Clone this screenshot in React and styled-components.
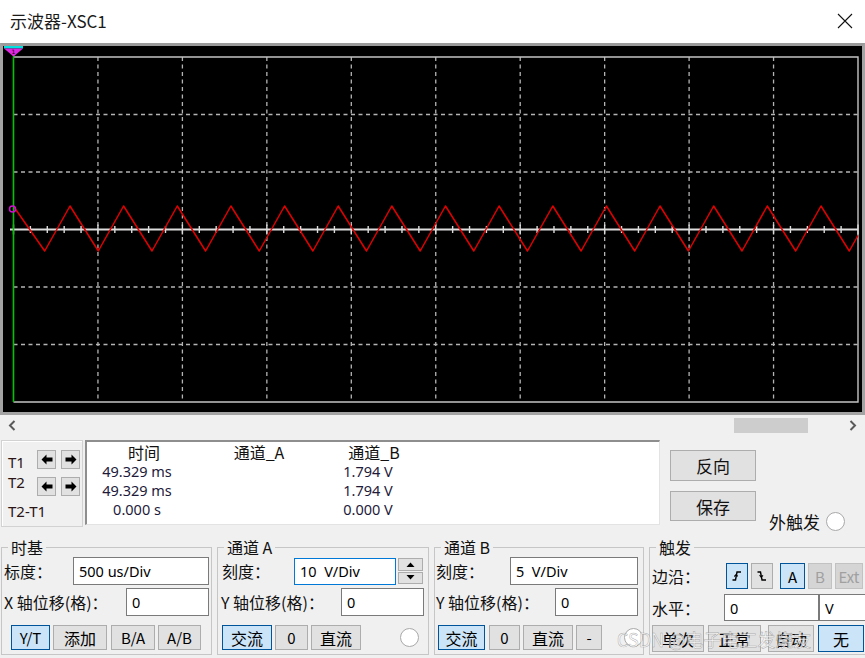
import React from 'react';
import styled, { createGlobalStyle } from 'styled-components';

const GlobalStyle = createGlobalStyle`
  html, body {
    margin: 0;
    padding: 0;
    background: #f0f0f0;
    overflow: hidden;
  }
  * { box-sizing: border-box; }
`;

const FONT = `"Noto Sans", "Noto Sans CJK SC", sans-serif`;
const CJK = `"Noto Sans CJK SC", "Noto Sans", sans-serif`;

const Window = styled.div`
  position: relative;
  width: 865px;
  height: 658px;
  background: #f0f0f0;
  font-family: ${CJK};
  color: #111;
  overflow: hidden;
`;

const TitleBar = styled.div`
  height: 43px;
  background: #fff;
  display: flex;
  align-items: center;
  justify-content: space-between;
  padding: 0 12px 2px 10px;
`;

const Title = styled.span`
  font-size: 17px;
  color: #1a1a1a;
`;

const Screen = styled.div`
  height: 372px;
  border: 3px solid #a3a3a3;
  border-top-color: #9a9a9a;
  background: #000;
  line-height: 0;
`;

const ScrollRow = styled.div`
  height: 21px;
  display: flex;
  align-items: center;
`;

const ScrollArrow = styled.div`
  width: 24px;
  height: 21px;
  display: flex;
  align-items: center;
  justify-content: center;
`;

const Track = styled.div`
  flex: 1;
  height: 21px;
  display: flex;
  align-items: center;
`;

const Thumb = styled.div`
  margin-left: ${p => p.$at}px;
  width: 74px;
  height: 15px;
  background: #cdcdcd;
`;

const TopRow = styled.div`
  display: flex;
  align-items: flex-start;
  padding: 4px 0 0 1px;
  height: 91px;
`;

const CursorBox = styled.div`
  width: 82px;
  height: 87px;
  border: 1px solid #d2d2d2;
  box-shadow: inset 1px 1px 0 #fff;
  padding: 9px 0 0 6px;
`;

const CursorRow = styled.div`
  display: flex;
  align-items: center;
  height: ${p => p.$h}px;
  margin-top: ${p => p.$mt || 0}px;
`;

const CursorLabel = styled.span`
  width: ${p => p.$w || 29}px;
  font-family: ${FONT};
  font-size: 15px;
  color: #2a1414;
  margin-top: ${p => p.$dy || 0}px;
`;

const ArrowBtn = styled.div`
  width: 19px;
  height: 19px;
  margin-left: ${p => p.$ml || 0}px;
  background: #e1e1e1;
  border: 1px solid #adadad;
  display: flex;
  align-items: center;
  justify-content: center;
`;

const DataBox = styled.div`
  width: 575px;
  height: 85px;
  margin-left: 2px;
  background: #fff;
  border-top: 2px solid #8e8e8e;
  border-left: 2px solid #8e8e8e;
  border-right: 1px solid #e3e3e3;
  border-bottom: 1px solid #e3e3e3;
`;

const DataRow = styled.div`
  display: flex;
  height: 19px;
  align-items: center;
`;

const Cell = styled.span`
  width: ${p => p.$w}px;
  text-align: center;
  padding-right: ${p => p.$pr || 0}px;
  font-family: ${p => (p.$head ? CJK : FONT)};
  font-size: ${p => (p.$head ? 16 : 14.5)}px;
  color: ${p => (p.$head ? '#111' : '#1d1a3a')};
  white-space: pre;
`;

const BtnCol = styled.div`
  margin-left: 10px;
  padding-top: 10px;
  display: flex;
  flex-direction: column;
  gap: 10px;
`;

const BigBtn = styled.div`
  width: 86px;
  height: ${p => p.$h}px;
  background: #e1e1e1;
  border: 1px solid #adadad;
  display: flex;
  align-items: center;
  justify-content: center;
  font-size: 17px;
`;

const ExtTrig = styled.div`
  margin-left: 13px;
  margin-top: 69px;
  display: flex;
  align-items: center;
  gap: 6px;
  font-size: 17px;
`;

const Radio = styled.span`
  display: inline-block;
  width: 19px;
  height: 19px;
  border-radius: 50%;
  background: #fff;
  border: 1px solid #a9a9a9;
  margin-left: ${p => (p.$auto ? 'auto' : `${p.$ml || 0}px`)};
  margin-right: ${p => p.$mr || 0}px;
  flex-shrink: 0;
`;

const Groups = styled.div`
  display: flex;
  padding-left: 1px;
  margin-top: 10px;
`;

const Group = styled.fieldset`
  flex-shrink: 0;
  width: ${p => p.$w}px;
  height: 118px;
  margin: 0 0 0 ${p => p.$ml || 0}px;
  padding: 0;
  border: 1px solid #c6c6c6;
  min-width: 0;
`;

const Legend = styled.legend`
  margin-left: 6px;
  padding: 0 3px;
  font-size: 16px;
  line-height: 20px;
  color: #111;
`;

const Row = styled.div`
  display: flex;
  align-items: center;
  height: ${p => p.$h}px;
  margin-top: ${p => p.$mt || 0}px;
`;

const Label = styled.span`
  flex-shrink: 0;
  width: ${p => p.$w}px;
  padding-left: ${p => p.$pl || 0}px;
  font-size: 16px;
  white-space: nowrap;
  color: #111;
`;

const TextBox = styled.input`
  flex-shrink: 0;
  width: ${p => p.$w}px;
  height: ${p => p.$h || 28}px;
  margin: 0;
  padding: 0 0 0 5px;
  background: #fff;
  border: 1px solid ${p => (p.$focus ? '#0078d7' : '#7a7a7a')};
  font-family: ${FONT};
  font-size: 14.5px;
  color: #000;
  outline: none;
`;

const Spinner = styled.div`
  margin-left: 2px;
  width: 25px;
  height: 26px;
  display: flex;
  flex-direction: column;
  gap: 1px;
`;

const SpinPart = styled.div`
  flex: 1;
  background: #e1e1e1;
  border: 1px solid #adadad;
  display: flex;
  align-items: center;
  justify-content: center;
`;

const Btn = styled.div`
  flex-shrink: 0;
  width: ${p => p.$w}px;
  height: ${p => p.$h || 25}px;
  margin-left: ${p => p.$ml || 0}px;
  background: ${p => (p.$on ? '#cce4f7' : p.$off ? '#d5d5d5' : '#e1e1e1')};
  border: 1px solid ${p => (p.$on ? '#005499' : p.$off ? '#c2c2c2' : '#adadad')};
  color: ${p => (p.$off ? '#a0a0a0' : '#000')};
  font-family: ${CJK};
  font-size: ${p => p.$fs || 16}px;
  display: flex;
  align-items: center;
  justify-content: center;
`;

const Watermark = styled.div`
  position: absolute;
  left: 617px;
  top: 626px;
  font-family: ${CJK};
  font-size: 18px;
  color: rgba(255, 255, 255, 0.72);
  -webkit-text-stroke: 0.5px rgba(110, 110, 110, 0.55);
  white-space: nowrap;
  pointer-events: none;
`;

/* ---------- drawings ---------- */

const X0 = 13.5;
const X1 = 858;
const Y0 = 57;
const Y1 = 402;
const DX = (X1 - X0) / 10;
const DY = (Y1 - Y0) / 6;
const YC = Y0 + DY * 3;

function wavePoints() {
  const pts = [[14, 207]];
  const period = 53.64;
  for (let k = 0; k < 20; k++) {
    const t = 44.7 + period * k;
    const p = 70 + period * k;
    if (t > X1) break;
    pts.push([t, 251]);
    if (p > X1) {
      const y = 251 - ((X1 - t) / (p - t)) * 45;
      pts.push([X1, y]);
      break;
    }
    pts.push([p, 206]);
  }
  return pts.map(([x, y]) => `${x.toFixed(1)},${y.toFixed(1)}`).join(' ');
}

function ScopeScreen() {
  const vx = Array.from({ length: 9 }, (_, i) => X0 + DX * (i + 1));
  const hy = [1, 2, 4, 5].map(i => Y0 + DY * i);
  const ticks = Array.from({ length: 51 }, (_, i) => ({ x: X0 + (DX / 5) * i, major: i % 5 === 0 }));
  return (
    <svg width="859" height="366" viewBox="3 46 859 366">
      <rect x="3" y="46" width="859" height="366" fill="#000" />
      {vx.map(x => (
        <line key={x} x1={x} y1={Y0} x2={x} y2={Y1} stroke="#b4b4b4" strokeWidth="1.3" strokeDasharray="4 3.5" />
      ))}
      {hy.map(y => (
        <line key={y} x1={X0} y1={y} x2={X1} y2={y} stroke="#b4b4b4" strokeWidth="1.3" strokeDasharray="4 3.5" />
      ))}
      <polyline points={`${X0},${Y0} ${X1},${Y0} ${X1},${Y1} ${X0},${Y1}`} fill="none" stroke="#c4c4c4" strokeWidth="1.4" />
      <line x1="10" y1={YC} x2={X1} y2={YC} stroke="#dcdcdc" strokeWidth="2" />
      {ticks.map(t => (
        <line key={t.x} x1={t.x} y1={YC - (t.major ? 5 : 3.5)} x2={t.x} y2={YC + (t.major ? 5 : 3.5)} stroke="#dcdcdc" strokeWidth="1.4" />
      ))}
      <polyline points={wavePoints()} fill="none" stroke="#e00000" strokeWidth="1.5" strokeLinejoin="round" />
      <line x1={X0} y1="52" x2={X0} y2={Y1} stroke="#00c400" strokeWidth="1.6" />
      <rect x="4" y="46" width="19" height="2.5" fill="#00e0e0" />
      <polygon points="4,48.5 23,48.5 13.5,56.5" fill="#e028e0" />
      <text x="11.5" y="53.5" fontSize="6" fill="#000" fontFamily="DejaVu Sans">1</text>
      <circle cx="12.5" cy="209" r="3" fill="none" stroke="#d010d0" strokeWidth="1.5" />
    </svg>
  );
}

const Chevron = ({ dir }) => (
  <svg width="8" height="11" viewBox="0 0 8 11">
    <path d={dir === 'left' ? 'M6.5 1 L2 5.5 L6.5 10' : 'M1.5 1 L6 5.5 L1.5 10'} fill="none" stroke="#5a5a5a" strokeWidth="2" />
  </svg>
);

const BlockArrow = ({ dir }) => (
  <svg width="12" height="11" viewBox="0 0 12 11">
    <path
      d={dir === 'left' ? 'M0.5 5.5 L5.5 0.5 V3.6 H11.5 V7.4 H5.5 V10.5 Z' : 'M11.5 5.5 L6.5 0.5 V3.6 H0.5 V7.4 H6.5 V10.5 Z'}
      fill="#000"
    />
  </svg>
);

const Edge = ({ rising }) => (
  <svg width="12" height="12" viewBox="0 0 12 12">
    <path
      d={rising ? 'M1.5 10 H4.5 L6 2 H10' : 'M1.5 2 H4.5 L6 10 H10'}
      fill="none"
      stroke="#000"
      strokeWidth="1.4"
    />
    <path d={rising ? 'M3.3 6.5 L5.2 4.6 L6.7 6.3' : 'M3.6 5.2 L5.3 7.2 L7 5.4'} fill="none" stroke="#000" strokeWidth="1.1" />
  </svg>
);

const Tri = ({ up }) => (
  <svg width="9" height="5" viewBox="0 0 9 5">
    <path d={up ? 'M0.5 5 L4.5 0.5 L8.5 5 Z' : 'M0.5 0 L4.5 4.5 L8.5 0 Z'} fill="#000" />
  </svg>
);

export default function App() {
  return (
    <Window>
      <GlobalStyle />
      <TitleBar>
        <Title>示波器-XSC1</Title>
        <svg width="16" height="16" viewBox="0 0 16 16">
          <path d="M1 1 L15 15 M15 1 L1 15" stroke="#111" strokeWidth="1.1" />
        </svg>
      </TitleBar>

      <Screen>
        <ScopeScreen />
      </Screen>

      <ScrollRow>
        <ScrollArrow><Chevron dir="left" /></ScrollArrow>
        <Track><Thumb $at={710} /></Track>
        <ScrollArrow><Chevron dir="right" /></ScrollArrow>
      </ScrollRow>

      <TopRow>
        <CursorBox>
          <CursorRow $h={19}>
            <CursorLabel $dy={5}>T1</CursorLabel>
            <ArrowBtn><BlockArrow dir="left" /></ArrowBtn>
            <ArrowBtn $ml={5}><BlockArrow dir="right" /></ArrowBtn>
          </CursorRow>
          <CursorRow $h={19} $mt={8}>
            <CursorLabel $dy={-9}>T2</CursorLabel>
            <ArrowBtn><BlockArrow dir="left" /></ArrowBtn>
            <ArrowBtn $ml={5}><BlockArrow dir="right" /></ArrowBtn>
          </CursorRow>
          <CursorRow $h={22} $mt={4}>
            <CursorLabel $w={60}>T2-T1</CursorLabel>
          </CursorRow>
        </CursorBox>

        <DataBox>
          <DataRow>
            <Cell $head $w={114}>时间</Cell>
            <Cell $head $w={116}>通道_A</Cell>
            <Cell $head $w={114}>通道_B</Cell>
          </DataRow>
          <DataRow>
            <Cell $w={114} $pr={14}>49.329 ms</Cell>
            <Cell $w={116}></Cell>
            <Cell $w={114} $pr={12}>1.794 V</Cell>
          </DataRow>
          <DataRow>
            <Cell $w={114} $pr={14}>49.329 ms</Cell>
            <Cell $w={116}></Cell>
            <Cell $w={114} $pr={12}>1.794 V</Cell>
          </DataRow>
          <DataRow>
            <Cell $w={114} $pr={14}>0.000 s</Cell>
            <Cell $w={116}></Cell>
            <Cell $w={114} $pr={12}>0.000 V</Cell>
          </DataRow>
        </DataBox>

        <BtnCol>
          <BigBtn $h={31}>反向</BigBtn>
          <BigBtn $h={30}>保存</BigBtn>
        </BtnCol>

        <ExtTrig>
          外触发
          <Radio />
        </ExtTrig>
      </TopRow>

      <Groups>
        <Group $w={211}>
          <Legend>时基</Legend>
          <Row $h={28}>
            <Label $w={71} $pl={2}>标度：</Label>
            <TextBox $w={136} readOnly value="500 us/Div" />
          </Row>
          <Row $h={28} $mt={3}>
            <Label $w={124} $pl={2}>X 轴位移(格)：</Label>
            <TextBox $w={83} readOnly value="0" />
          </Row>
          <Row $h={25} $mt={9}>
            <Btn $w={39} $ml={9} $on $fs={15}>Y/T</Btn>
            <Btn $w={54} $ml={3}>添加</Btn>
            <Btn $w={44} $ml={4} $fs={15}>B/A</Btn>
            <Btn $w={43} $ml={3} $fs={15}>A/B</Btn>
          </Row>
        </Group>

        <Group $w={212} $ml={5}>
          <Legend>通道 A</Legend>
          <Row $h={28}>
            <Label $w={76} $pl={4}>刻度：</Label>
            <TextBox $w={102} $h={27} $focus readOnly value="10  V/Div" />
            <Spinner>
              <SpinPart><Tri up /></SpinPart>
              <SpinPart><Tri /></SpinPart>
            </Spinner>
          </Row>
          <Row $h={28} $mt={3}>
            <Label $w={123} $pl={3}>Y 轴位移(格)：</Label>
            <TextBox $w={83} readOnly value="0" />
          </Row>
          <Row $h={25} $mt={9}>
            <Btn $w={50} $ml={4} $on>交流</Btn>
            <Btn $w={33} $ml={3} $fs={15}>0</Btn>
            <Btn $w={50} $ml={3}>直流</Btn>
            <Radio $auto $mr={9} />
          </Row>
        </Group>

        <Group $w={210} $ml={5}>
          <Legend>通道 B</Legend>
          <Row $h={28}>
            <Label $w={75} $pl={1}>刻度：</Label>
            <TextBox $w={128} readOnly value="5  V/Div" />
          </Row>
          <Row $h={28} $mt={3}>
            <Label $w={120} $pl={1}>Y 轴位移(格)：</Label>
            <TextBox $w={83} readOnly value="0" />
          </Row>
          <Row $h={25} $mt={9}>
            <Btn $w={47} $ml={3} $on>交流</Btn>
            <Btn $w={31} $ml={4} $fs={15}>0</Btn>
            <Btn $w={50} $ml={3}>直流</Btn>
            <Btn $w={26} $ml={3} $fs={15}>-</Btn>
            <Radio $auto $mr={0} />
          </Row>
        </Group>

        <Group $w={219} $ml={5}>
          <Legend>触发</Legend>
          <Row $h={26} $mt={6}>
            <Label $w={76} $pl={2}>边沿：</Label>
            <Btn $w={22} $h={26} $on><Edge rising /></Btn>
            <Btn $w={22} $h={26} $ml={3}><Edge /></Btn>
            <Btn $w={25} $h={26} $ml={7} $on $fs={15}>A</Btn>
            <Btn $w={24} $h={26} $ml={3} $off $fs={15}>B</Btn>
            <Btn $w={28} $h={26} $ml={3} $off $fs={15}>Ext</Btn>
          </Row>
          <Row $h={27} $mt={5}>
            <Label $w={74} $pl={2}>水平：</Label>
            <TextBox $w={95} $h={27} readOnly value="0" />
            <TextBox $w={47} $h={27} readOnly value="V" />
          </Row>
          <Row $h={27} $mt={4}>
            <Btn $w={52} $h={27} $ml={2}>单次</Btn>
            <Btn $w={53} $h={27} $ml={4}>正常</Btn>
            <Btn $w={46} $h={27} $ml={7}>自动</Btn>
            <Btn $w={46} $h={27} $ml={4} $on>无</Btn>
          </Row>
        </Group>
      </Groups>

      <Watermark>CSDN @电子电工发烧友</Watermark>
    </Window>
  );
}
